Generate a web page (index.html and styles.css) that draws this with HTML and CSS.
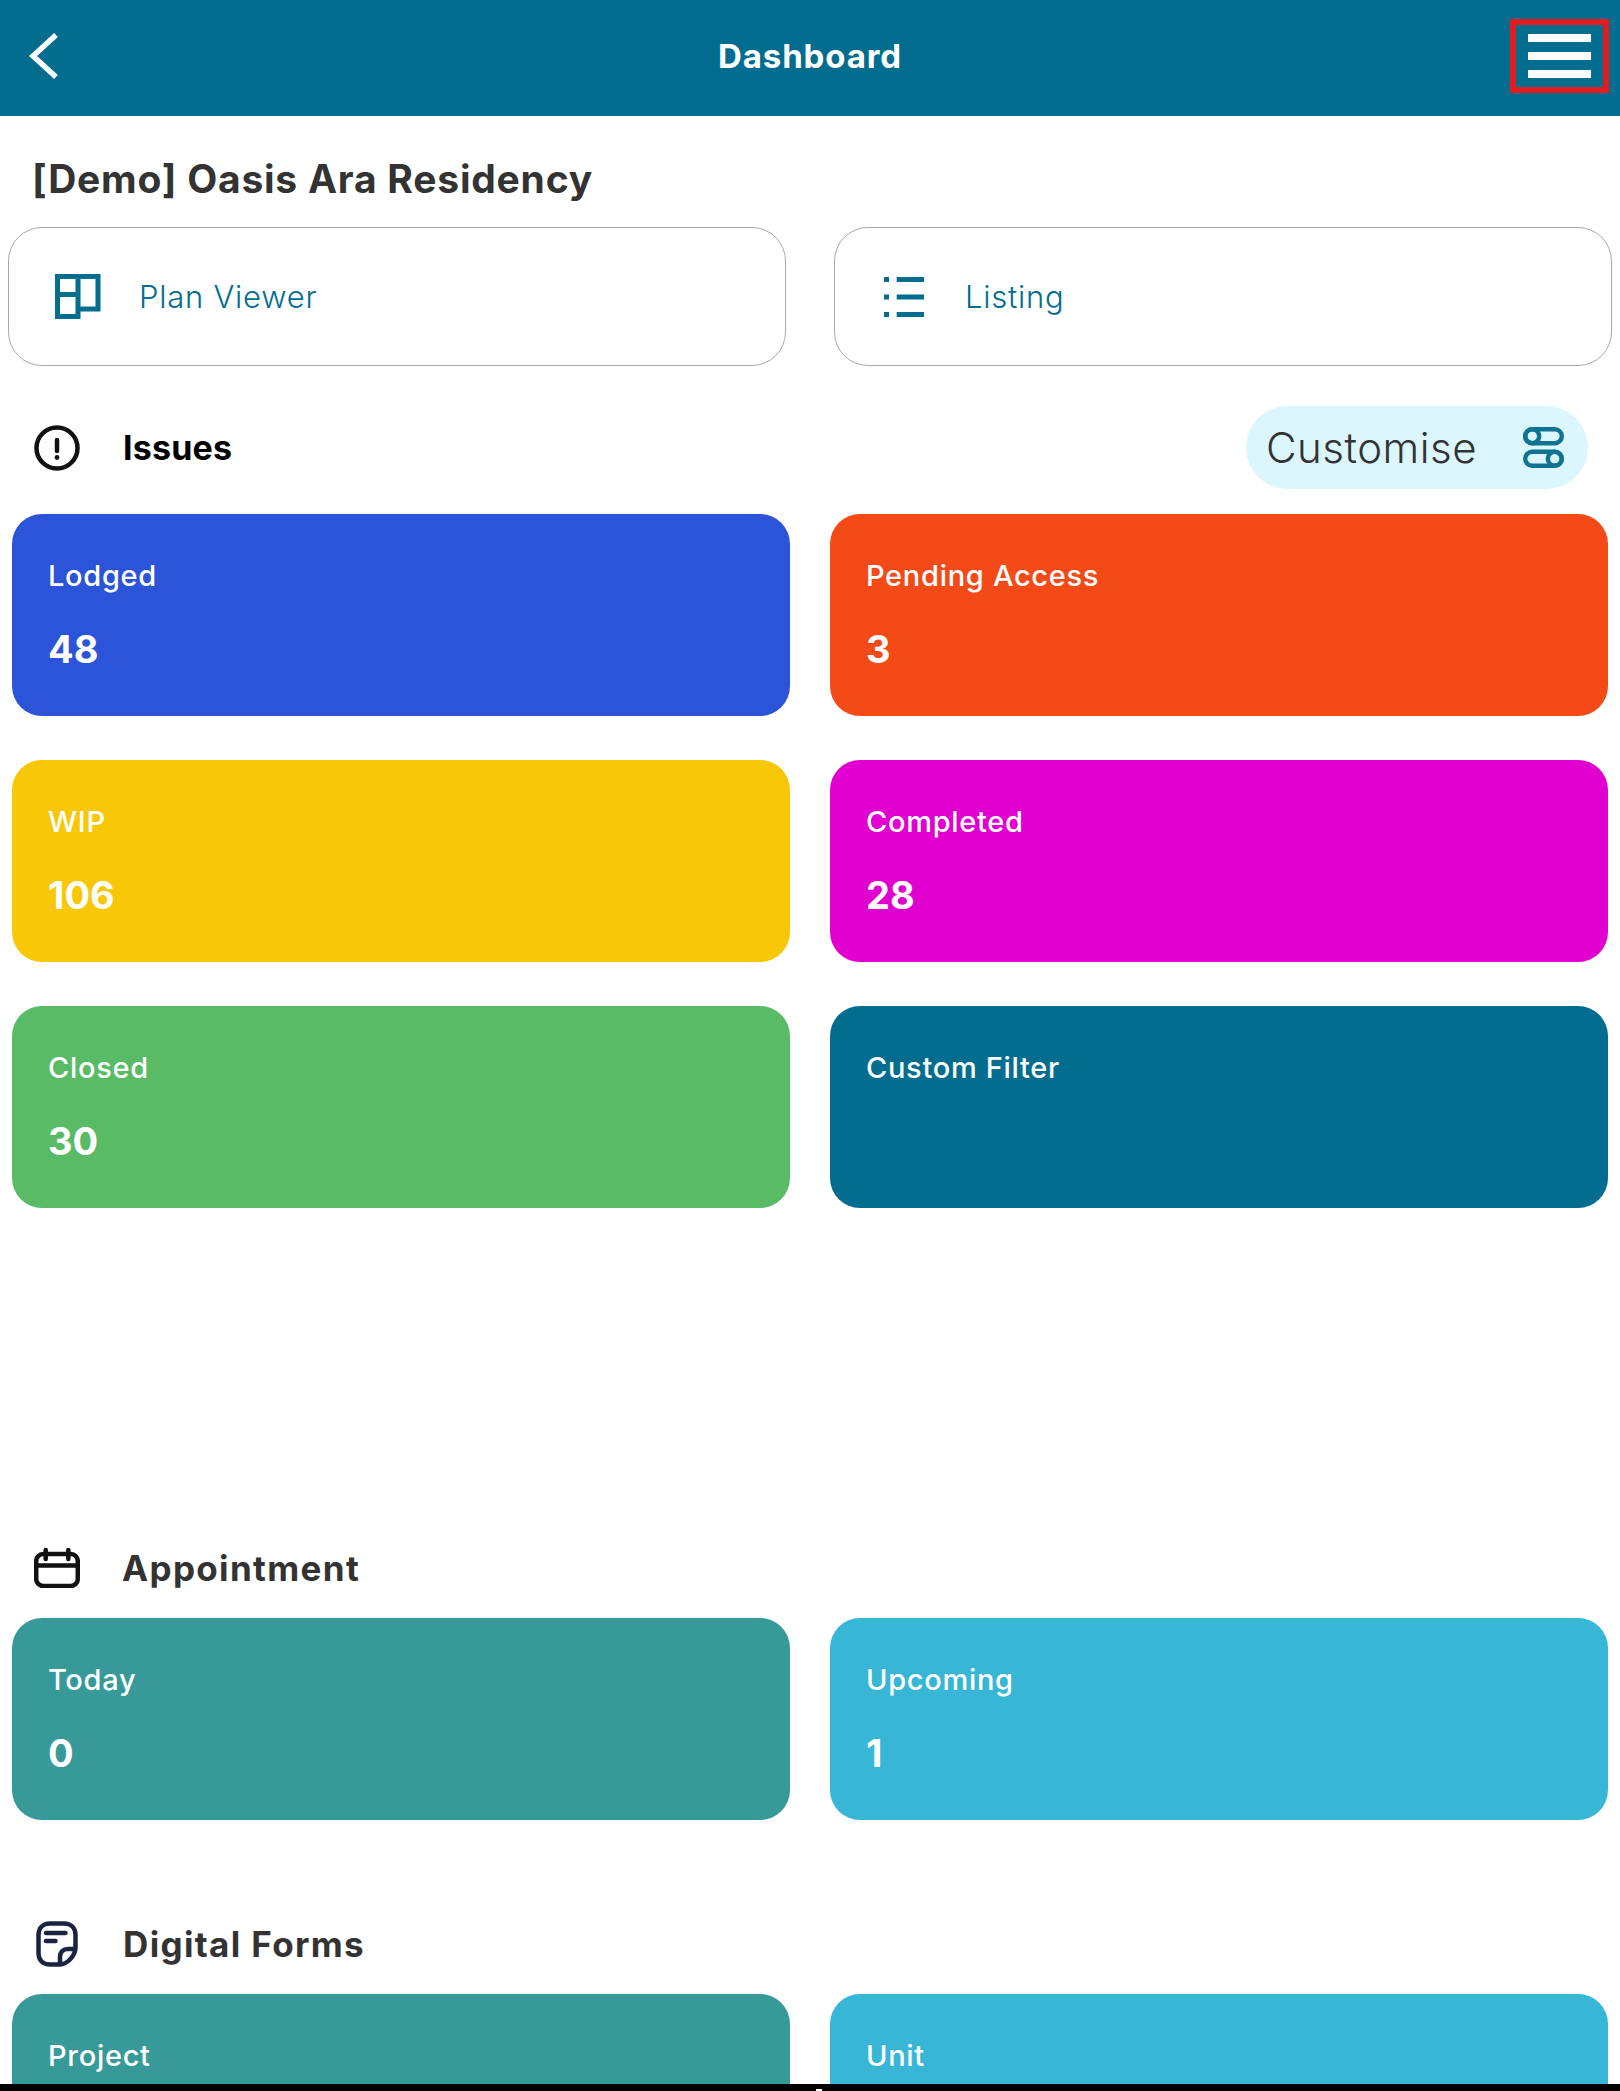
FILE: index.html
```html
<!DOCTYPE html>
<html lang="en">
<head>
  <meta charset="UTF-8">
  <meta name="viewport" content="width=device-width, initial-scale=1.0">
  <title>Dashboard</title>
  <link rel="stylesheet" href="styles.css">
</head>
<body>
  <header class="topbar">
    <svg class="back" viewBox="0 0 30 48"><path d="M27 3 L4 24 L27 45"/></svg>
    <h1>Dashboard</h1>
    <div class="menu"><span></span><span></span><span></span></div>
  </header>
  <main class="content">
    <h2 class="project">[Demo] Oasis Ara Residency</h2>
    <div class="links">
      <a class="link">
        <svg class="plan-icon" viewBox="0 0 46 45"><path d="M2.5 2.5H23V42.5H2.5Z M2.5 20.5H23 M23 2.5H43V35H23"/></svg>
        Plan Viewer
      </a>
      <a class="link">
        <svg class="list-icon" viewBox="0 0 40 40"><path d="M0 2.5H5 M12.7 2.5H40 M0 20H5 M12.7 20H40 M0 37.5H5 M12.7 37.5H40"/></svg>
        Listing
      </a>
    </div>

    <section class="section issues">
      <div class="head">
        <svg class="head-icon" viewBox="0 0 46 46"><circle cx="23" cy="23" r="20.5"/><path d="M23 15V26"/><circle class="dot" cx="23" cy="32.5" r="2.4"/></svg>
        <h3>Issues</h3>
        <button class="customise">
          Customise
          <svg viewBox="0 0 41 41"><rect x="2.2" y="2.2" width="36.6" height="14" rx="7"/><circle cx="9.2" cy="9.2" r="7"/><rect x="2.2" y="24.8" width="36.6" height="14" rx="7"/><circle cx="31.8" cy="31.8" r="7"/></svg>
        </button>
      </div>
      <div class="cards">
        <div class="card blue"><div class="label">Lodged</div><div class="num">48</div></div>
        <div class="card orange"><div class="label">Pending Access</div><div class="num">3</div></div>
        <div class="card yellow"><div class="label">WIP</div><div class="num">106</div></div>
        <div class="card magenta"><div class="label">Completed</div><div class="num">28</div></div>
        <div class="card green"><div class="label">Closed</div><div class="num">30</div></div>
        <div class="card teal"><div class="label">Custom Filter</div></div>
      </div>
    </section>

    <section class="section appointment">
      <div class="head">
        <svg class="head-icon" viewBox="0 0 46 40"><rect x="2.2" y="6" width="41.6" height="32" rx="7"/><path d="M2.2 17.5H43.8 M11.7 2V11 M34.3 2V11"/></svg>
        <h3>Appointment</h3>
      </div>
      <div class="cards">
        <div class="card sea"><div class="label">Today</div><div class="num">0</div></div>
        <div class="card sky"><div class="label">Upcoming</div><div class="num">1</div></div>
      </div>
    </section>

    <section class="section forms">
      <div class="head">
        <svg class="head-icon note" viewBox="0 0 42 46"><path d="M14 2.5H28C35 2.5 39.5 7 39.5 14V26C39.5 36 30 43.5 24 43.5H14C7 43.5 2.5 39 2.5 32V14C2.5 7 7 2.5 14 2.5Z M24 43.5V36C24 31 27 28 32 28H39.5 M10 12H29.5 M10 20H19.5"/></svg>
        <h3>Digital Forms</h3>
      </div>
      <div class="cards">
        <div class="card sea"><div class="label">Project</div></div>
        <div class="card sky"><div class="label">Unit</div></div>
      </div>
    </section>
  </main>
  <div class="homebar"><span></span></div>
</body>
</html>
```

FILE: styles.css
```css
* { box-sizing: border-box; }
body { margin: 0; height: 100vh; display: flex; flex-direction: column; overflow: hidden; background: #fff; font-family: Inter, "Open Sans", sans-serif; color: #333; }

.topbar { height: 116px; flex: none; background: #026d8f; display: flex; align-items: center; justify-content: center; position: relative; }
.topbar h1 { margin: 0 0 5px; font-size: 33px; font-weight: 700; letter-spacing: .9px; color: #fff; }
.back { position: absolute; left: 29px; top: 32px; width: 30px; height: 48px; }
.back path { fill: none; stroke: #fff; stroke-width: 5.5; }
.menu { position: absolute; left: 1510px; top: 19px; width: 99px; height: 74px; border: 6px solid #e31b1f; padding: 9px 12px; display: flex; flex-direction: column; gap: 10px; }
.menu span { height: 8px; background: #fff; }

.content { flex: 1; overflow: hidden; }
.project { margin: 0; height: 111px; padding: 42px 0 0 32px; font-size: 39px; line-height: 42px; font-weight: 700; letter-spacing: .77px; }

.links { display: grid; grid-template-columns: 1fr 1fr; gap: 48px; padding: 0 8px; }
.link { height: 139px; border: 1px solid #aaa; border-radius: 34px; display: flex; align-items: center; font-size: 31px; font-weight: 300; letter-spacing: .75px; color: #026d8f; }
.plan-icon { width: 46px; height: 45px; margin: 0 38px 0 46px; fill: none; stroke: #026d8f; stroke-width: 5; }
.list-icon { width: 40px; height: 40px; margin: 0 41px 0 49px; fill: none; stroke: #026d8f; stroke-width: 5; }

.section { padding: 0 12px; }
.head { height: 40px; display: flex; align-items: center; }
.head h3 { margin: 0 0 0 42px; font-size: 35px; font-weight: 700; letter-spacing: 1.35px; }
.head-icon { width: 46px; height: 40px; margin-left: 22px; fill: none; stroke: #111; stroke-width: 4.5; stroke-linecap: round; flex: none; }
.head-icon .dot { fill: #111; stroke: none; }
.head-icon.note { width: 42px; height: 46px; margin: 0 3px 0 24px; stroke: #1a2340; }

.issues { margin-top: 40px; }
.issues .head { height: 83px; margin-bottom: 25px; }
.issues .head-icon { height: 46px; }
.issues .head h3 { margin: 0 auto 0 43px; font-size: 34px; letter-spacing: .2px; color: #000; }
.customise { width: 342px; height: 83px; margin-right: 20px; border: 0; border-radius: 42px; background: #dcf6fe; display: flex; align-items: center; justify-content: space-between; padding: 0 24px 0 20px; font-family: inherit; font-size: 42px; font-weight: 300; letter-spacing: .5px; color: #333; }
.customise svg { width: 41px; height: 41px; fill: none; stroke: #0f7391; stroke-width: 4.4; }

.cards { display: grid; grid-template-columns: 1fr 1fr; gap: 44px 40px; }
.card { height: 202px; border-radius: 30px; padding: 42px 36px 0; color: #fff; }
.label { font-size: 29px; line-height: 40px; font-weight: 500; letter-spacing: .7px; }
.num { margin-top: 31px; font-size: 38px; line-height: 44px; font-weight: 700; }
.blue { background: #2b54d8; }
.orange { background: #f34a17; }
.yellow { background: #f8c808; }
.magenta { background: #e100d0; }
.green { background: #5abb66; }
.teal { background: #026d8f; }
.sea { background: #389a98; }
.sky { background: #38b6d6; }

.appointment { margin-top: 340px; }
.appointment .head, .forms .head { margin-bottom: 30px; }
.forms { margin-top: 104px; }

.homebar { height: 7px; flex: none; background: #000; display: flex; justify-content: center; align-items: flex-end; }
.homebar span { width: 6px; height: 2px; background: #fff; margin-left: 18px; }
```
